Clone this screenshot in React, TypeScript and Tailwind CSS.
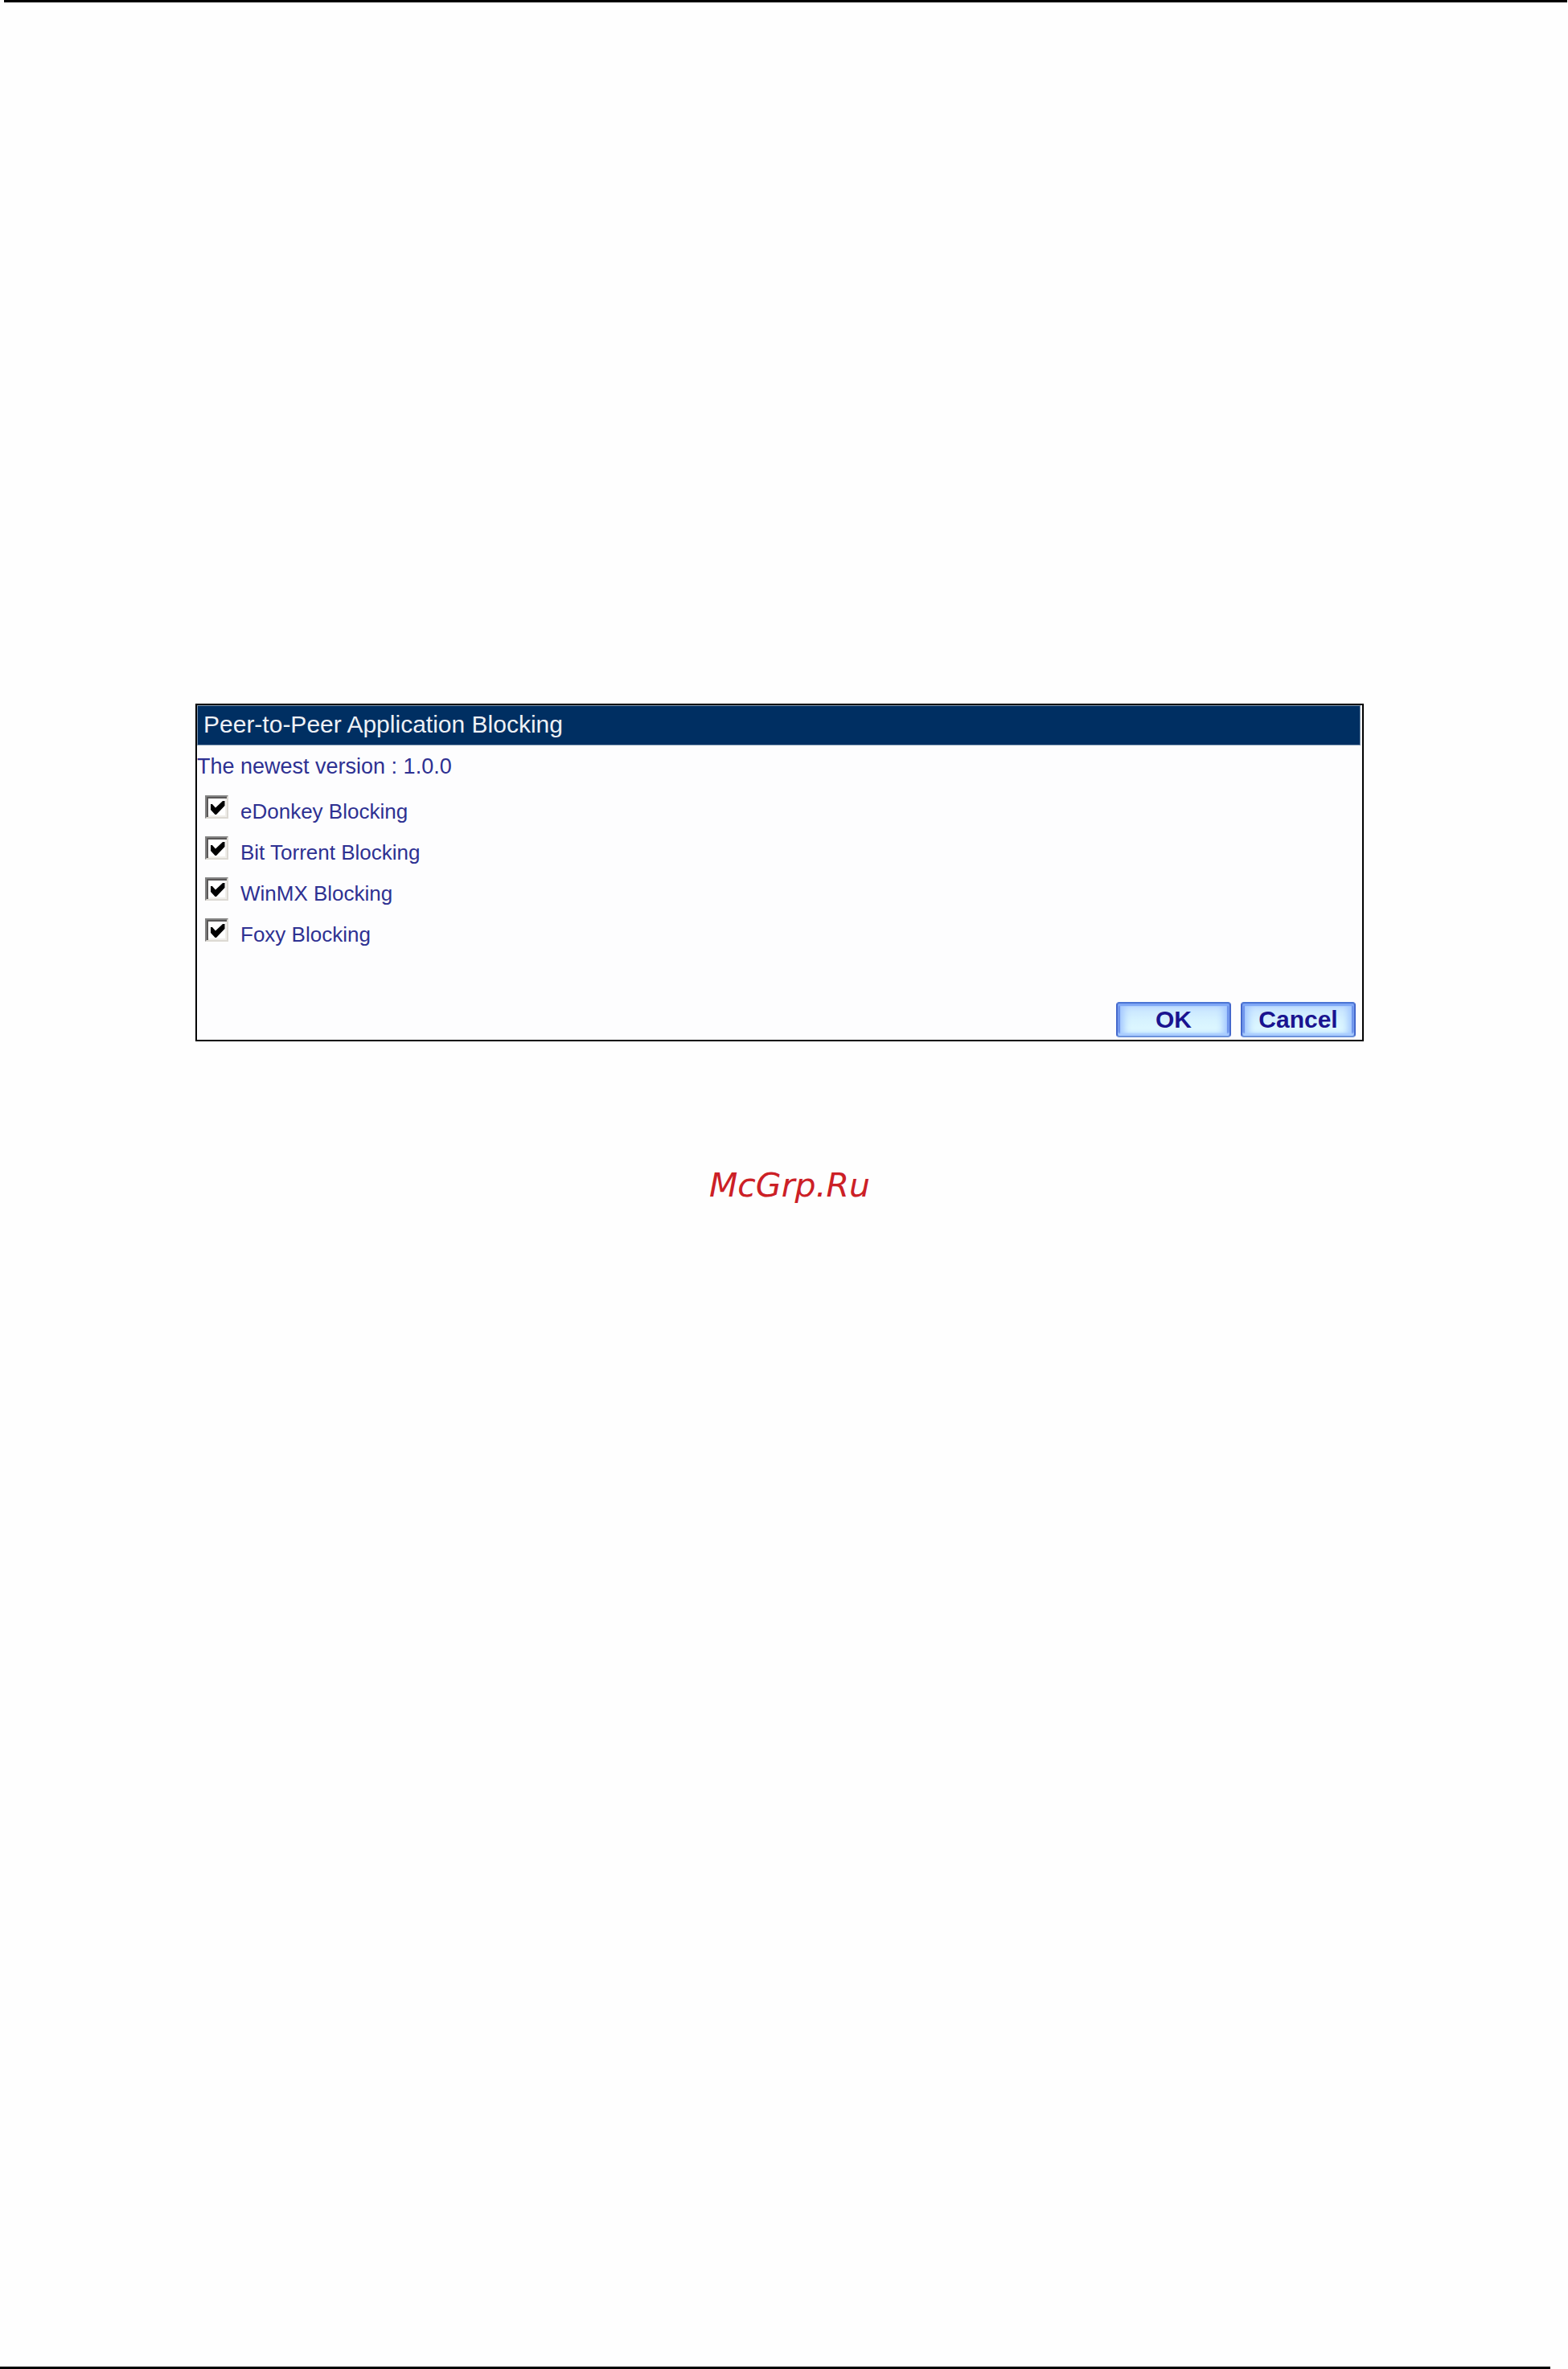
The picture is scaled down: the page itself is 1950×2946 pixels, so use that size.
import { useState } from "react";

const OPTIONS = [
  { id: "edonkey", label: "eDonkey Blocking" },
  { id: "bittorrent", label: "Bit Torrent Blocking" },
  { id: "winmx", label: "WinMX Blocking" },
  { id: "foxy", label: "Foxy Blocking" },
];

function CheckRow({ id, label }: { id: string; label: string }) {
  const [checked, setChecked] = useState(true);
  return (
    <li className="flex h-[51px] items-start">
      <span className="relative block size-[29px] shrink-0">
        <input
          id={id}
          type="checkbox"
          checked={checked}
          onChange={() => setChecked(!checked)}
          className="peer block size-[29px] appearance-none border-2 border-t-[#858585] border-r-[#dcd9d3] border-b-[#dcd9d3] border-l-[#858585] bg-white shadow-[inset_2px_2px_0_#5a5858,inset_-2px_-2px_0_#f0eeea]"
        />
        <svg
          viewBox="0 0 29 29"
          className="pointer-events-none absolute inset-0 hidden size-[29px] peer-checked:block"
          fill="#000"
        >
          <path d="M7 11H9L13 15.500 22 7H24.500V13L14 24H12.500L7 18Z" />
        </svg>
      </span>
      <label htmlFor={id} className="mt-[5px] ml-[15px] text-[26px] leading-[30px] text-[#2e3192]">
        {label}
      </label>
    </li>
  );
}

function BevelButton({ children }: { children: string }) {
  return (
    <button
      type="button"
      className="flex h-[44px] w-[143px] items-center justify-center rounded-[4px] border-2 border-t-[#4a74d4] border-r-[#4468cc] border-b-[#6c93dc] border-l-[#4468cc] bg-linear-to-b from-[#c4e0ff] via-[#d6f2ff] to-[#e2fbff] text-[30px] leading-[36px] font-bold text-[#1a1490] shadow-[inset_0_3px_1px_#7ea6f6,inset_0_-3px_2px_#a9ccff,inset_3px_0_1px_#6a90ea,inset_-3px_0_1px_#6a90ea,inset_8px_0_8px_#a4c8ff,inset_-8px_0_8px_#a4c8ff]"
    >
      {children}
    </button>
  );
}

export default function App() {
  return (
    <div className="flex min-h-screen flex-col bg-[#fefefe] font-['Liberation_Sans',Arial,sans-serif]">
      <hr className="mr-px ml-[5px] h-[3px] border-0 bg-black" />

      <form
        className="mt-[872px] mr-[254px] ml-[243px] border-2 border-black bg-[#fdfdfe]"
        onSubmit={(event) => event.preventDefault()}
      >
        <h1 className="mr-[2px] h-[50px] border border-[#7f97b0] bg-[#002f62] pl-[7px] text-[30px] leading-[46px] text-[#eef1f5]">
          Peer-to-Peer Application Blocking
        </h1>
        <p className="mt-[9px] text-[27px] leading-[34px] text-[#2e3192]">
          The newest version : 1.0.0
        </p>
        <ul className="mt-[19px] ml-[10px]">
          {OPTIONS.map((option) => (
            <CheckRow key={option.id} id={option.id} label={option.label} />
          ))}
        </ul>
        <div className="mt-[53px] mr-2 mb-[3px] flex justify-end gap-3">
          <BevelButton>OK</BevelButton>
          <BevelButton>Cancel</BevelButton>
        </div>
      </form>

      <p className="mt-[155px] ml-[14px] text-center font-['DejaVu_Sans',sans-serif] text-[41px] leading-[48px] text-[#cc2026] italic">
        McGrp.Ru
      </p>

      <hr className="mt-auto mr-[22px] h-[3px] border-0 bg-black" />
    </div>
  );
}
